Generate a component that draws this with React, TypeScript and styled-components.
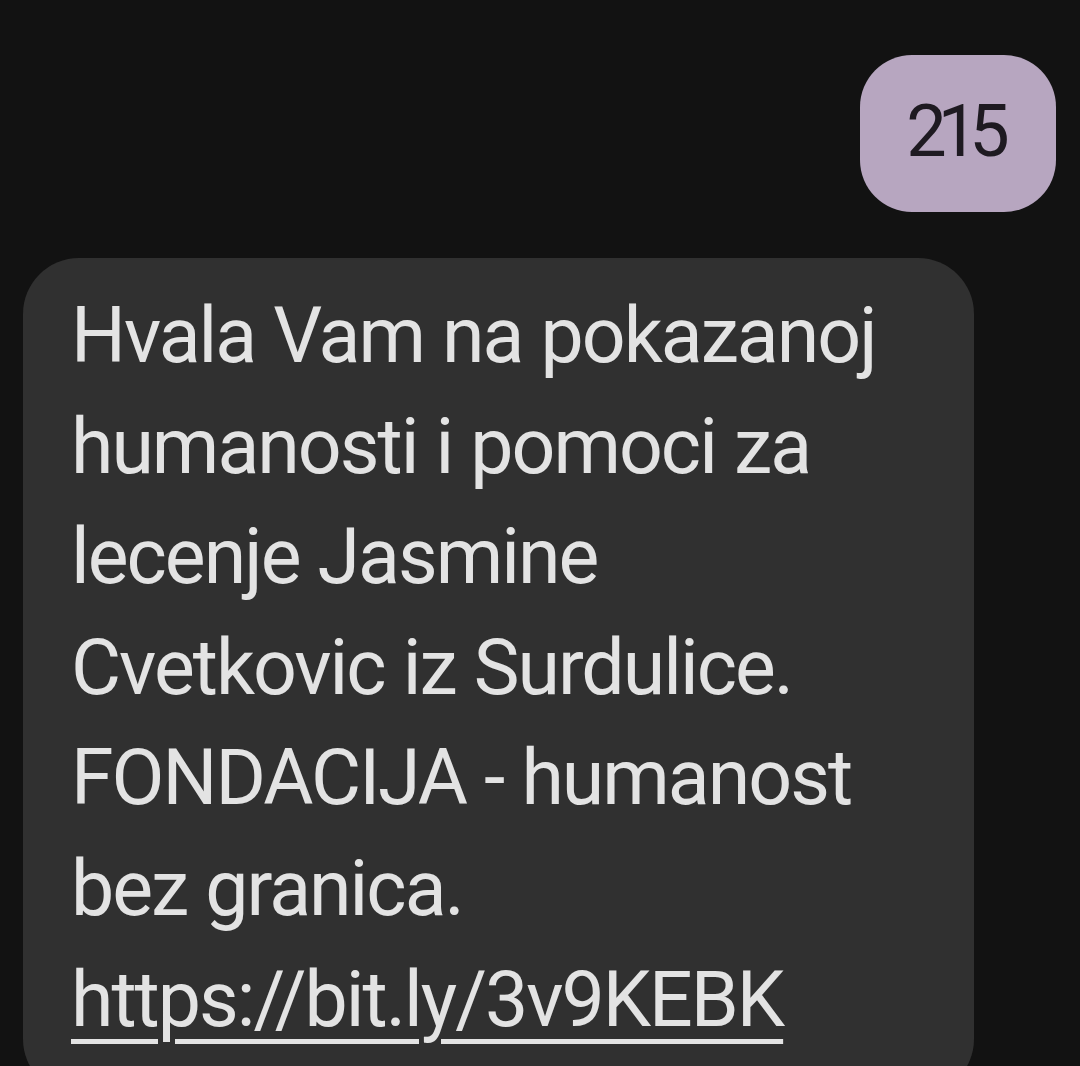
import React from "react";
import styled, { createGlobalStyle } from "styled-components";

const GlobalStyle = createGlobalStyle`
  html, body {
    margin: 0;
    padding: 0;
    background: #121212;
  }
  body {
    font-family: Roboto, "Noto Sans", "Liberation Sans", sans-serif;
    overflow: hidden;
  }
`;

const Screen = styled.div`
  width: 1080px;
  height: 1066px;
  overflow: hidden;
  background: #121212;
  display: flex;
  flex-direction: column;
  padding-top: 55px;
  box-sizing: border-box;
`;

const OutRow = styled.div`
  display: flex;
  justify-content: flex-end;
  padding-right: 24px;
`;

const OutBubble = styled.div`
  width: 196px;
  height: 157px;
  box-sizing: border-box;
  padding: 0 9px 4px 0;
  border-radius: 52px;
  background: #b7a6c0;
  color: #1e1a21;
  display: flex;
  align-items: center;
  justify-content: center;
  font-size: 72px;
  letter-spacing: -9px;
`;

const InRow = styled.div`
  display: flex;
  padding-left: 23px;
  margin-top: 46px;
`;

const InBubble = styled.div`
  width: 951px;
  box-sizing: border-box;
  border-radius: 56px;
  background: #303030;
  color: #e3e3e3;
  padding: 23px 20px 40px 48px;
  font-size: 77px;
  line-height: 110.6px;
  letter-spacing: -2px;
  word-spacing: 1px;
`;

const Link = styled.a`
  color: inherit;
  text-decoration: underline;
  text-decoration-thickness: 5px;
  text-underline-offset: 13px;
`;

const lines = [
  "Hvala Vam na pokazanoj",
  "humanosti i pomoci za",
  "lecenje Jasmine",
  "Cvetkovic iz Surdulice.",
  "FONDACIJA - humanost",
  "bez granica.",
];

export default function App() {
  return (
    <>
      <GlobalStyle />
      <Screen>
        <OutRow>
          <OutBubble>215</OutBubble>
        </OutRow>
        <InRow>
          <InBubble>
            {lines.map((l) => (
              <React.Fragment key={l}>
                {l}
                <br />
              </React.Fragment>
            ))}
            <Link href="#">https://bit.ly/3v9KEBK</Link>
          </InBubble>
        </InRow>
      </Screen>
    </>
  );
}
